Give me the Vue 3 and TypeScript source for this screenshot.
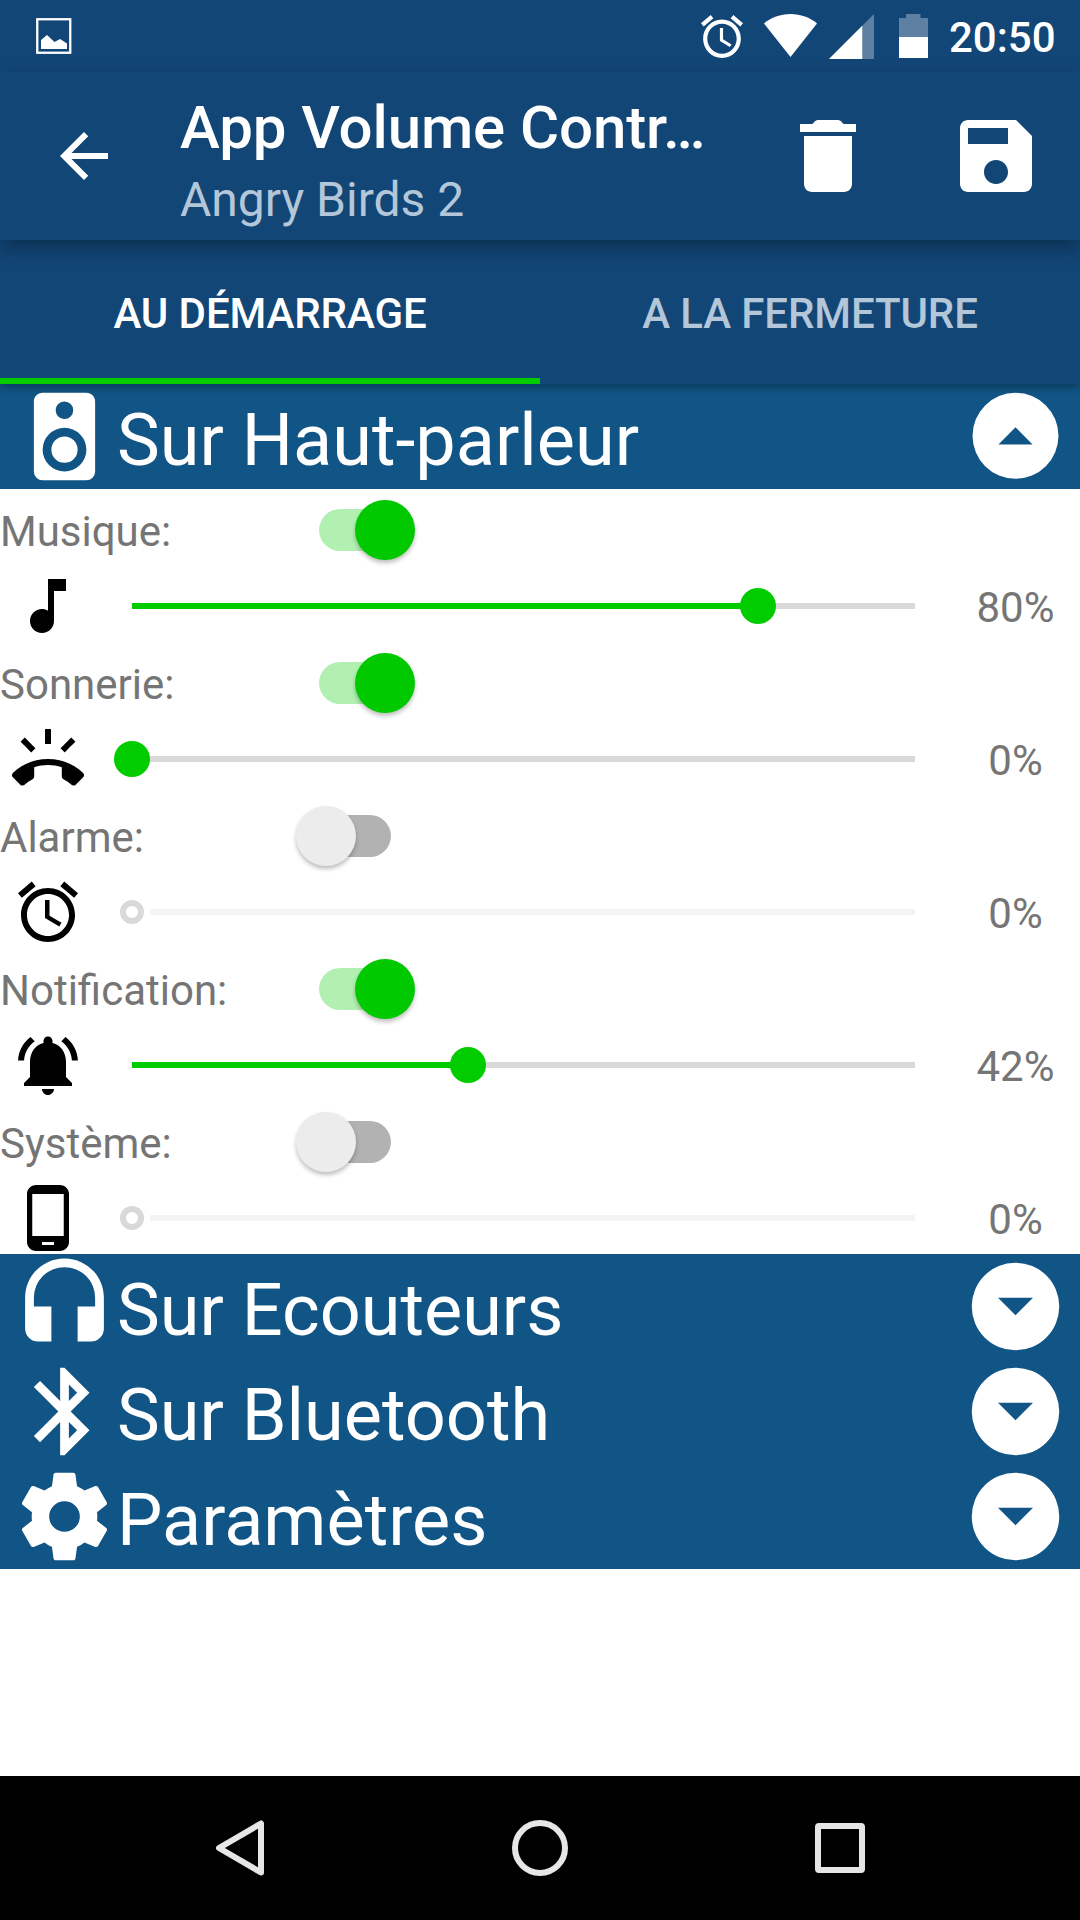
<script setup lang="ts">
interface Channel {
  label: string
  icon: string
  enabled: boolean
  value: string
  // Slider position, in percent of the track
  position: number
}

interface Section {
  title: string
  icon: string
}

const ALARM =
  'M22 5.72l-4.6-3.86-1.29 1.53 4.6 3.86L22 5.72zM7.88 3.39L6.6 1.86 2 5.71l1.29 1.53 4.59-3.85zM12.5 8H11v6l4.75 2.85.75-1.23-4-2.37V8zM12 4c-4.97 0-9 4.03-9 9s4.02 9 9 9c4.97 0 9-4.03 9-9s-4.03-9-9-9zm0 16c-3.87 0-7-3.13-7-7s3.13-7 7-7 7 3.13 7 7-3.13 7-7 7z'

const channels: Channel[] = [
  {
    label: 'Musique:',
    enabled: true,
    value: '80%',
    position: 80,
    icon: 'M12 3v10.55c-.59-.34-1.27-.55-2-.55-2.21 0-4 1.79-4 4s1.79 4 4 4 4-1.79 4-4V7h4V3h-6z',
  },
  {
    label: 'Sonnerie:',
    enabled: true,
    value: '0%',
    position: 0,
    icon: 'M23.71 16.67C20.66 13.78 16.54 12 12 12 7.46 12 3.34 13.78.29 16.67c-.18.18-.29.43-.29.71 0 .28.11.53.29.71l2.48 2.48c.18.18.43.29.71.29.27 0 .52-.11.7-.28.79-.74 1.69-1.36 2.66-1.85.33-.16.56-.5.56-.9v-3.1c1.45-.48 3-.73 4.6-.73 1.6 0 3.15.25 4.6.72v3.1c0 .39.23.74.56.9.98.49 1.87 1.12 2.67 1.85.18.18.43.28.7.28.28 0 .53-.11.71-.29l2.48-2.48c.18-.18.29-.43.29-.71 0-.28-.12-.52-.3-.7zM21.16 6.26l-1.41-1.41-3.56 3.55 1.41 1.41s3.45-3.52 3.56-3.55zM13 2h-2v5h2V2zM6.4 9.81L7.81 8.4 4.26 4.84 2.84 6.26c.11.03 3.56 3.55 3.56 3.55z',
  },
  { label: 'Alarme:', enabled: false, value: '0%', position: 0, icon: ALARM },
  {
    label: 'Notification:',
    enabled: true,
    value: '42%',
    position: 42.86,
    icon: 'M7.58 4.08L6.15 2.65C3.75 4.48 2.17 7.3 2.03 10.5h2c.15-2.65 1.51-4.97 3.55-6.42zm12.39 6.42h2c-.15-3.2-1.73-6.02-4.12-7.85l-1.42 1.43c2.02 1.45 3.39 3.77 3.54 6.42zM18 11c0-3.07-1.64-5.64-4.5-6.32V4c0-.83-.67-1.5-1.5-1.5s-1.5.67-1.5 1.5v.68C7.63 5.36 6 7.92 6 11v5l-2 2v1h16v-1l-2-2v-5zm-6 11c.14 0 .27-.01.4-.04.65-.14 1.18-.58 1.44-1.18.1-.24.15-.5.15-.78h-4c.01 1.1.9 2 2.01 2z',
  },
  {
    label: 'Système:',
    enabled: false,
    value: '0%',
    position: 0,
    icon: 'M16 1H8C6.34 1 5 2.34 5 4v16c0 1.66 1.34 3 3 3h8c1.66 0 3-1.34 3-3V4c0-1.66-1.34-3-3-3zm-2 20h-4v-1h4v1zm3.25-3H6.75V4h10.5v14z',
  },
]

const speaker =
  'M12,12A3,3 0 0,0 9,15A3,3 0 0,0 12,18A3,3 0 0,0 15,15A3,3 0 0,0 12,12M12,20A5,5 0 0,1 7,15A5,5 0 0,1 12,10A5,5 0 0,1 17,15A5,5 0 0,1 12,20M12,4A2,2 0 0,1 14,6A2,2 0 0,1 12,8C10.89,8 10,7.1 10,6C10,4.89 10.89,4 12,4M17,2H7C5.89,2 5,2.89 5,4V20A2,2 0 0,0 7,22H17A2,2 0 0,0 19,20V4C19,2.89 18.1,2 17,2Z'

const collapsed: Section[] = [
  {
    title: 'Sur Ecouteurs',
    icon: 'M12,1C7,1 3,5 3,10V17A3,3 0 0,0 6,20H9V12H5V10A7,7 0 0,1 12,3A7,7 0 0,1 19,10V12H15V20H18A3,3 0 0,0 21,17V10C21,5 16.97,1 12,1Z',
  },
  {
    title: 'Sur Bluetooth',
    icon: 'M14.88,16.29L13,18.17V14.41M13,5.83L14.88,7.71L13,9.58M17.71,7.71L12,2H11V9.58L6.41,5L5,6.41L10.59,12L5,17.58L6.41,19L11,14.41V22H12L17.71,16.29L13.41,12L17.71,7.71Z',
  },
  {
    title: 'Paramètres',
    icon: 'M12,15.5A3.5,3.5 0 0,1 8.5,12A3.5,3.5 0 0,1 12,8.5A3.5,3.5 0 0,1 15.5,12A3.5,3.5 0 0,1 12,15.5M19.43,12.97C19.47,12.65 19.5,12.33 19.5,12C19.5,11.67 19.47,11.34 19.43,11L21.54,9.37C21.73,9.22 21.78,8.95 21.66,8.73L19.66,5.27C19.54,5.05 19.27,4.96 19.05,5.05L16.56,6.05C16.04,5.66 15.5,5.32 14.87,5.07L14.5,2.42C14.46,2.18 14.25,2 14,2H10C9.75,2 9.54,2.18 9.5,2.42L9.13,5.07C8.5,5.32 7.96,5.66 7.44,6.05L4.95,5.05C4.73,4.96 4.46,5.05 4.34,5.27L2.34,8.73C2.21,8.95 2.27,9.22 2.46,9.37L4.57,11C4.53,11.34 4.5,11.67 4.5,12C4.5,12.33 4.53,12.65 4.57,12.97L2.46,14.63C2.27,14.78 2.21,15.05 2.34,15.27L4.34,18.73C4.46,18.95 4.73,19.03 4.95,18.95L7.44,17.94C7.96,18.34 8.5,18.68 9.13,18.93L9.5,21.58C9.54,21.82 9.75,22 10,22H14C14.25,22 14.46,21.82 14.5,21.58L14.87,18.93C15.5,18.67 16.04,18.34 16.56,17.94L19.05,18.95C19.27,19.03 19.54,18.95 19.66,18.73L21.66,15.27C21.78,15.05 21.73,14.78 21.54,14.63L19.43,12.97Z',
  },
]
</script>

<template>
  <div class="screen">
    <div class="statusbar">
      <svg class="st-image" viewBox="0 0 36 36">
        <rect x="1.25" y="1.25" width="33" height="33.5" fill="none" stroke="#fff" stroke-width="2.3" />
        <path d="M5 31V22l6-5 7.500 7 5.500-3 7 4.500V31z" fill="#fff" />
      </svg>
      <span class="grow"></span>
      <svg class="st-alarm" viewBox="2 1.860 20 20.140" preserveAspectRatio="none"><path :d="ALARM" fill="#fff" /></svg>
      <svg class="st-wifi" viewBox="0 0 53 43"><path d="M26.500 43L0 9.500C7 3.500 16.500 0 26.500 0S46 3.500 53 9.500z" fill="#fff" /></svg>
      <svg class="st-signal" viewBox="0 0 46 46">
        <path d="M0 46L46 0v46z" fill="#5e80a3" />
        <path d="M0 46L34 12v34z" fill="#fff" />
      </svg>
      <svg class="st-battery" viewBox="0 0 29 44">
        <path d="M7 0h14.500v4H29v19H0V4h7z" fill="#5e80a3" />
        <path d="M0 23h29v21H0z" fill="#fff" />
      </svg>
      <span class="clock">20:50</span>
    </div>

    <header class="appbar">
      <svg class="back" viewBox="0 0 24 24"><path d="M20 11H7.830l5.590-5.590L12 4l-8 8 8 8 1.410-1.410L7.830 13H20v-2z" /></svg>
      <div class="titles">
        <div class="title">App Volume Contr…</div>
        <div class="subtitle">Angry Birds 2</div>
      </div>
      <svg class="action" viewBox="0 0 24 24"><path d="M6 19c0 1.100.9 2 2 2h8c1.100 0 2-.9 2-2V7H6v12zM19 4h-3c-.4 0-.6-1-1.500-1h-5c-.9 0-1.100 1-1.500 1H5v2h14V4z" /></svg>
      <svg class="action save" viewBox="0 0 24 24"><path d="M17 3H5c-1.110 0-2 .9-2 2v14c0 1.100.890 2 2 2h14c1.100 0 2-.9 2-2V7l-4-4zm-5 16c-1.660 0-3-1.340-3-3s1.340-3 3-3 3 1.340 3 3-1.340 3-3 3zm3-10H5V5h10v4z" /></svg>
    </header>

    <nav class="tabs">
      <div class="tab active">AU DÉMARRAGE</div>
      <div class="tab">A LA FERMETURE</div>
    </nav>

    <section class="section">
      <svg class="sec-icon" viewBox="0 0 24 24"><path :d="speaker" /></svg>
      <h2>Sur Haut-parleur</h2>
      <svg class="sec-icon" viewBox="0 0 24 24"><path d="M12 2.020a9.820 9.820 0 1 0 0 19.640 9.820 9.820 0 0 0 0-19.640zM12 9.900l3.900 3.950H8.100z" /></svg>
    </section>

    <div v-for="c in channels" :key="c.label" class="channel">
      <div class="switch-row">
        <span class="label">{{ c.label }}</span>
        <span class="switch" :class="{ on: c.enabled }"><span class="thumb"></span></span>
      </div>
      <div class="slider-row">
        <svg class="ch-icon" viewBox="0 0 24 24"><path :d="c.icon" /></svg>
        <div class="slider" :class="{ disabled: !c.enabled }">
          <div class="fill" :style="{ width: c.position + '%' }"></div>
          <div class="knob" :style="{ left: c.position + '%' }"></div>
        </div>
        <span class="value">{{ c.value }}</span>
      </div>
    </div>

    <section v-for="s in collapsed" :key="s.title" class="section">
      <svg class="sec-icon" viewBox="0 0 24 24"><path :d="s.icon" fill-rule="evenodd" /></svg>
      <h2>{{ s.title }}</h2>
      <svg class="sec-icon" viewBox="0 0 24 24"><path d="M12 2a10 10 0 1 0 0 20 10 10 0 0 0 0-20zm0 12l-4-4h8z" /></svg>
    </section>

    <footer class="navbar">
      <svg viewBox="0 0 72 72"><path d="M57 11.500v49L15 36z" /></svg>
      <svg viewBox="0 0 72 72"><circle cx="36" cy="36" r="25" /></svg>
      <svg viewBox="0 0 72 72"><rect x="14" y="14" width="44" height="44" rx="1" /></svg>
    </footer>
  </div>
</template>

<style>
body {
  margin: 0;
  background: #fff;
}
</style>

<style scoped>
.screen {
  width: 1080px;
  height: 1920px;
  display: flex;
  flex-direction: column;
  overflow: hidden;
  background: #fff;
  font-family: Roboto, 'Liberation Sans', sans-serif;
}
svg {
  display: block;
  flex: none;
}
.statusbar {
  flex: none;
  height: 72px;
  box-sizing: border-box;
  padding: 0 25px 0 36px;
  display: flex;
  align-items: flex-start;
  background: #124677;
}
.grow {
  flex: 1;
}
.st-image {
  width: 36px;
  height: 36px;
  margin-top: 18px;
}
.st-alarm {
  width: 42px;
  height: 43px;
  margin: 15px 21px 0 0;
}
.st-wifi {
  width: 53px;
  height: 43px;
  margin: 14px 12px 0 0;
}
.st-signal {
  width: 45px;
  height: 45px;
  margin: 14px 25px 0 0;
}
.st-battery {
  width: 29px;
  height: 44px;
  margin: 14px 21px 0 0;
}
.clock {
  width: 106px;
  margin-top: 13px;
  font-size: 42px;
  line-height: 50px;
  font-weight: 500;
  color: #fff;
  white-space: nowrap;
}
.appbar {
  flex: none;
  position: relative;
  z-index: 2;
  height: 168px;
  display: flex;
  background: #124677;
  box-shadow: 0 9px 18px rgba(0, 0, 0, 0.3);
  fill: #fff;
}
.back {
  width: 72px;
  height: 72px;
  margin: 48px 60px 0 48px;
}
.titles {
  width: 600px;
  padding-top: 21px;
  white-space: nowrap;
}
.title {
  font-size: 60px;
  line-height: 70px;
  font-weight: 500;
  letter-spacing: -0.1px;
  color: #fff;
}
.subtitle {
  margin-top: 9px;
  font-size: 48px;
  line-height: 56px;
  color: #b3c7d9;
}
.action {
  width: 96px;
  height: 96px;
  margin-top: 36px;
}
.save {
  margin-left: 72px;
}
.tabs {
  flex: none;
  position: relative;
  z-index: 1;
  height: 144px;
  display: flex;
  background: #124677;
  box-shadow: 0 3px 8px rgba(0, 0, 0, 0.35);
}
.tab {
  flex: 1;
  box-sizing: border-box;
  height: 144px;
  padding-top: 8px;
  border-bottom: 6px solid transparent;
  display: flex;
  align-items: center;
  justify-content: center;
  font-size: 42px;
  font-weight: 500;
  letter-spacing: -0.1px;
  color: #b3c7d9;
}
.tab.active {
  color: #fff;
  border-bottom-color: #00cc00;
}
.section {
  flex: none;
  height: 105px;
  padding: 0 12px;
  display: flex;
  background: #115586;
  fill: #fff;
}
.section h2 {
  flex: 1;
  margin: 0;
  padding-top: 15px;
  font-size: 72px;
  line-height: 84px;
  font-weight: 400;
  color: #fff;
  white-space: nowrap;
}
.sec-icon {
  width: 105px;
  height: 105px;
}
.channel {
  flex: none;
  height: 153px;
}
.switch-row {
  height: 81px;
  display: flex;
  align-items: center;
}
.label {
  width: 319px;
  padding-top: 5px;
  font-size: 42px;
  line-height: 50px;
  color: #757575;
}
.switch {
  position: relative;
  width: 72px;
  height: 42px;
  border-radius: 21px;
  background: #b2b2b2;
}
.switch.on {
  background: #b2f0b2;
}
.thumb {
  position: absolute;
  left: -23.5px;
  top: -9px;
  width: 60px;
  height: 60px;
  border-radius: 50%;
  background: #ececec;
  box-shadow: 0 3px 4px rgba(0, 0, 0, 0.25);
}
.on .thumb {
  left: 35.5px;
  background: #00c900;
}
.slider-row {
  height: 72px;
  display: flex;
  align-items: center;
}
.ch-icon {
  width: 72px;
  height: 72px;
  margin: 0 48px 0 12px;
  fill: #000;
}
.slider {
  flex: none;
  position: relative;
  width: 783px;
  height: 6px;
  background: #d9d9d9;
}
.slider.disabled {
  width: 765px;
  margin-left: 18px;
  background: #f4f4f4;
}
.fill {
  height: 6px;
  background: #00cc00;
}
.knob {
  position: absolute;
  top: -15px;
  width: 36px;
  height: 36px;
  margin-left: -18px;
  border-radius: 50%;
  background: #00cc00;
}
.disabled .knob {
  box-sizing: border-box;
  top: -9px;
  width: 24px;
  height: 24px;
  margin-left: -30px;
  border: 6px solid #d9d9d9;
  background: #fff;
}
.value {
  flex: 1;
  margin-left: 36px;
  padding-top: 3px;
  font-size: 42px;
  line-height: 50px;
  text-align: center;
  color: #757575;
}
.navbar {
  flex: none;
  height: 144px;
  margin-top: auto;
  display: flex;
  align-items: center;
  justify-content: center;
  gap: 228px;
  background: #000;
}
.navbar svg {
  width: 72px;
  height: 72px;
  fill: none;
  stroke: #e6e6e6;
  stroke-width: 6;
  stroke-linejoin: round;
}
</style>
